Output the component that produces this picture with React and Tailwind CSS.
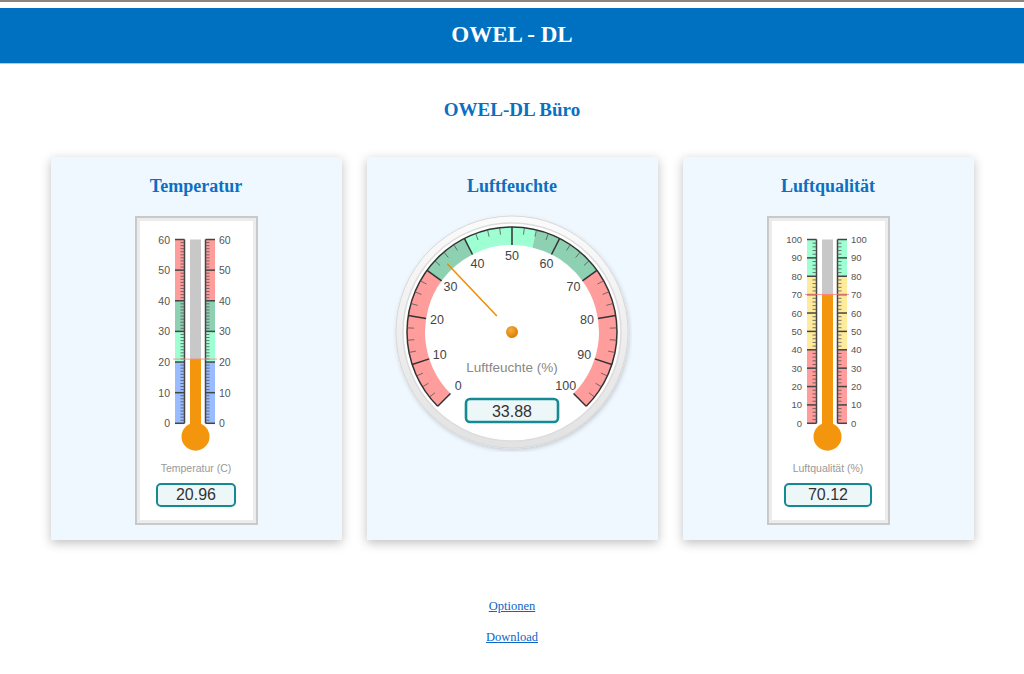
import React from 'react';

const serif = { fontFamily: '"Liberation Serif", "Times New Roman", serif' };
const sans = '"Liberation Sans", Arial, sans-serif';

const Thermometer = ({ min, max, major, minor, zones, value, fontSize }) => {
  const top = 18.5;
  const bottom = 202.3;
  const bulbY = 215.7;
  const y = (v) => bottom - ((v - min) / (max - min)) * (bottom - top);

  const majors = [];
  for (let v = min; v <= max; v += major) majors.push(v);
  const minors = [];
  for (let v = min; v <= max; v += minor) if ((v - min) % major !== 0) minors.push(v);

  return (
    <svg width="113" height="236" viewBox="0 0 113 236">
      {/* colour zones */}
      {zones.map((z, i) => (
        <g key={i}>
          <rect x="35" y={y(z.to)} width="9.5" height={y(z.from) - y(z.to)} fill={z.color} />
          <rect x="65.5" y={y(z.to)} width="9.5" height={y(z.from) - y(z.to)} fill={z.color} />
        </g>
      ))}

      {/* scale lines */}
      <line x1="44.5" y1={top} x2="44.5" y2={bottom} stroke="#444" strokeWidth="1.5" />
      <line x1="65.5" y1={top} x2="65.5" y2={bottom} stroke="#444" strokeWidth="1.5" />
      {minors.map((v) => (
        <g key={'m' + v}>
          <line x1="40.5" y1={y(v)} x2="44.5" y2={y(v)} stroke="#555" strokeWidth="0.8" />
          <line x1="65.5" y1={y(v)} x2="69.5" y2={y(v)} stroke="#555" strokeWidth="0.8" />
        </g>
      ))}
      {majors.map((v) => (
        <g key={'M' + v}>
          <line x1="35" y1={y(v)} x2="44.5" y2={y(v)} stroke="#444" strokeWidth="1.5" />
          <line x1="65.5" y1={y(v)} x2="75" y2={y(v)} stroke="#444" strokeWidth="1.5" />
          <text x="30" y={y(v)} textAnchor="end" dominantBaseline="central" fontSize={fontSize} fill="#555" fontFamily={sans}>
            {v}
          </text>
          <text x="79" y={y(v)} textAnchor="start" dominantBaseline="central" fontSize={fontSize} fill="#555" fontFamily={sans}>
            {v}
          </text>
        </g>
      ))}

      {/* tube */}
      <rect x="50" y={top} width="11" height={bulbY - top} fill="#c8c8c8" />
      <rect x="50" y={y(value)} width="11" height={bulbY - y(value)} fill="#f4950e" />
      <circle cx="55.5" cy={bulbY} r="14" fill="#f4950e" />
      <line x1="33" y1={y(value)} x2="77" y2={y(value)} stroke="#ff8080" strokeWidth="1" opacity="0.85" />
    </svg>
  );
};

const ThermoBox = ({ label, value, boxWidth, ...rest }) => (
  <div className="w-[123px] h-[309px] border-2 border-[#c9c9c9] bg-white">
    <div className="h-full border-[3px] border-[#ececec] flex flex-col items-center">
      <Thermometer value={value} {...rest} />
      <div className="mt-[5px] text-[10.5px] leading-[12px] text-[#999]" style={{ fontFamily: sans }}>
        {label}
      </div>
      <div
        className="mt-[9px] h-[24px] border-[2.5px] border-[#168a93] rounded-[5px] bg-[#eef7f8] flex items-center justify-center text-[16px] text-[#333]"
        style={{ width: boxWidth, fontFamily: sans }}
      >
        {value.toFixed(2)}
      </div>
    </div>
  </div>
);

const Gauge = ({ value }) => {
  const cx = 120;
  const cy = 120;
  const ang = (v) => ((-135 + v * 2.7) * Math.PI) / 180;
  const pt = (v, r) => [cx + r * Math.sin(ang(v)), cy - r * Math.cos(ang(v))];
  const band = (v1, v2, r1, r2) => {
    const large = (v2 - v1) * 2.7 > 180 ? 1 : 0;
    const a = pt(v1, r2);
    const b = pt(v2, r2);
    const c = pt(v2, r1);
    const d = pt(v1, r1);
    return `M${a[0]} ${a[1]} A${r2} ${r2} 0 ${large} 1 ${b[0]} ${b[1]} L${c[0]} ${c[1]} A${r1} ${r1} 0 ${large} 0 ${d[0]} ${d[1]} Z`;
  };
  const zones = [
    { from: 0, to: 30, color: '#ff9c9c' },
    { from: 30, to: 40, color: '#8ed0b2' },
    { from: 40, to: 55, color: '#9dffd2' },
    { from: 55, to: 70, color: '#8ed0b2' },
    { from: 70, to: 100, color: '#ff9c9c' },
  ];
  const majors = [0, 10, 20, 30, 40, 50, 60, 70, 80, 90, 100];
  const minors = [];
  for (let v = 0; v < 100; v += 2.5) if (v % 10 !== 0) minors.push(v);
  const s = pt(0, 105);
  const e = pt(100, 105);
  const n1 = pt(value, 22);
  const n2 = pt(value, 94);

  return (
    <svg width="240" height="240" viewBox="0 0 240 240">
      <defs>
        <linearGradient id="bezel" x1="0" y1="0" x2="0" y2="1">
          <stop offset="0" stopColor="#fbfbfb" />
          <stop offset="1" stopColor="#e2e2e2" />
        </linearGradient>
        <radialGradient id="hub" cx="0.4" cy="0.35" r="0.7">
          <stop offset="0" stopColor="#f7b03a" />
          <stop offset="1" stopColor="#d97800" />
        </radialGradient>
        <filter id="sh" x="-10%" y="-10%" width="120%" height="120%">
          <feDropShadow dx="1" dy="2" stdDeviation="2" floodColor="#000" floodOpacity="0.18" />
        </filter>
      </defs>
      <circle cx={cx} cy={cy} r="116" fill="url(#bezel)" stroke="#d8d8d8" strokeWidth="1" filter="url(#sh)" />
      <circle cx={cx} cy={cy} r="109" fill="#fff" stroke="#dcdcdc" strokeWidth="1.5" />

      {zones.map((z, i) => (
        <path key={i} d={band(z.from, z.to, 87, 105)} fill={z.color} />
      ))}
      <path d={`M${s[0]} ${s[1]} A105 105 0 1 1 ${e[0]} ${e[1]}`} fill="none" stroke="#333" strokeWidth="1.5" />
      {minors.map((v) => {
        const a = pt(v, 98);
        const b = pt(v, 105);
        return <line key={'m' + v} x1={a[0]} y1={a[1]} x2={b[0]} y2={b[1]} stroke="#555" strokeWidth="0.8" />;
      })}
      {majors.map((v) => {
        const a = pt(v, 87);
        const b = pt(v, 105);
        const t = pt(v, 76);
        return (
          <g key={'M' + v}>
            <line x1={a[0]} y1={a[1]} x2={b[0]} y2={b[1]} stroke="#333" strokeWidth="1.5" />
            <text x={t[0]} y={t[1]} textAnchor="middle" dominantBaseline="central" fontSize="12.5" fill="#444" fontFamily={sans}>
              {v}
            </text>
          </g>
        );
      })}

      <text x={cx} y="155" textAnchor="middle" dominantBaseline="central" fontSize="13.5" fill="#888" fontFamily={sans}>
        Luftfeuchte (%)
      </text>

      <line x1={n1[0]} y1={n1[1]} x2={n2[0]} y2={n2[1]} stroke="#f08c00" strokeWidth="1.5" />
      <circle cx={cx} cy={cy} r="6" fill="url(#hub)" />

      <rect x="74" y="187" width="92" height="23" rx="4" fill="#eef7f8" stroke="#168a93" strokeWidth="2.6" />
      <text x={cx} y="199" textAnchor="middle" dominantBaseline="central" fontSize="16" fill="#333" fontFamily={sans}>
        {value.toFixed(2)}
      </text>
    </svg>
  );
};

const Card = ({ title, children, gap }) => (
  <div className="w-[291px] h-[383px] bg-[#f0f8ff] shadow-[0_3px_10px_rgba(0,0,0,0.25)] flex flex-col items-center pt-[17px]">
    <h2 className="text-[18px] leading-[24px] font-bold text-[#0a70c2]" style={serif}>
      {title}
    </h2>
    <div className={gap}>{children}</div>
  </div>
);

export default function App() {
  return (
    <div className="w-[1024px] min-h-[674px] bg-white" style={serif}>
      <div className="h-[2px] bg-[#8a857c]" />
      <div className="mt-[6px] h-[56px] bg-[#0070c0] border-b border-[#a9cdea] flex items-center justify-center">
        <h1 className="text-[23px] font-bold text-white" style={serif}>
          OWEL - DL
        </h1>
      </div>

      <h2 className="mt-[34px] text-center text-[19px] leading-[24px] font-bold text-[#0a70c2]">OWEL-DL Büro</h2>

      <div className="mt-[35px] flex justify-center gap-[25px]">
        <Card title="Temperatur" gap="mt-[18px]">
          <ThermoBox
            label="Temperatur (C)"
            value={20.96}
            boxWidth={80}
            min={0}
            max={60}
            major={10}
            minor={1}
            fontSize={10.5}
            zones={[
              { from: 0, to: 20, color: '#99bbff' },
              { from: 20, to: 30, color: '#9dffd2' },
              { from: 30, to: 40, color: '#8ed0b2' },
              { from: 40, to: 60, color: '#ff9c9c' },
            ]}
          />
        </Card>
        <Card title="Luftfeuchte" gap="mt-[14px]">
          <Gauge value={33.88} />
        </Card>
        <Card title="Luftqualität" gap="mt-[18px]">
          <ThermoBox
            label="Luftqualität (%)"
            value={70.12}
            boxWidth={88}
            min={0}
            max={100}
            major={10}
            minor={2}
            fontSize={9.5}
            zones={[
              { from: 0, to: 40, color: '#ff9c9c' },
              { from: 40, to: 80, color: '#ffeb9c' },
              { from: 80, to: 100, color: '#9dffd2' },
            ]}
          />
        </Card>
      </div>

      <div className="mt-[58px] flex flex-col items-center gap-[15px] text-[12.5px] leading-[16px]">
        <a href="#" className="text-[#0b66c8] underline">
          Optionen
        </a>
        <a href="#" className="text-[#0b66c8] underline">
          Download
        </a>
      </div>
    </div>
  );
}
